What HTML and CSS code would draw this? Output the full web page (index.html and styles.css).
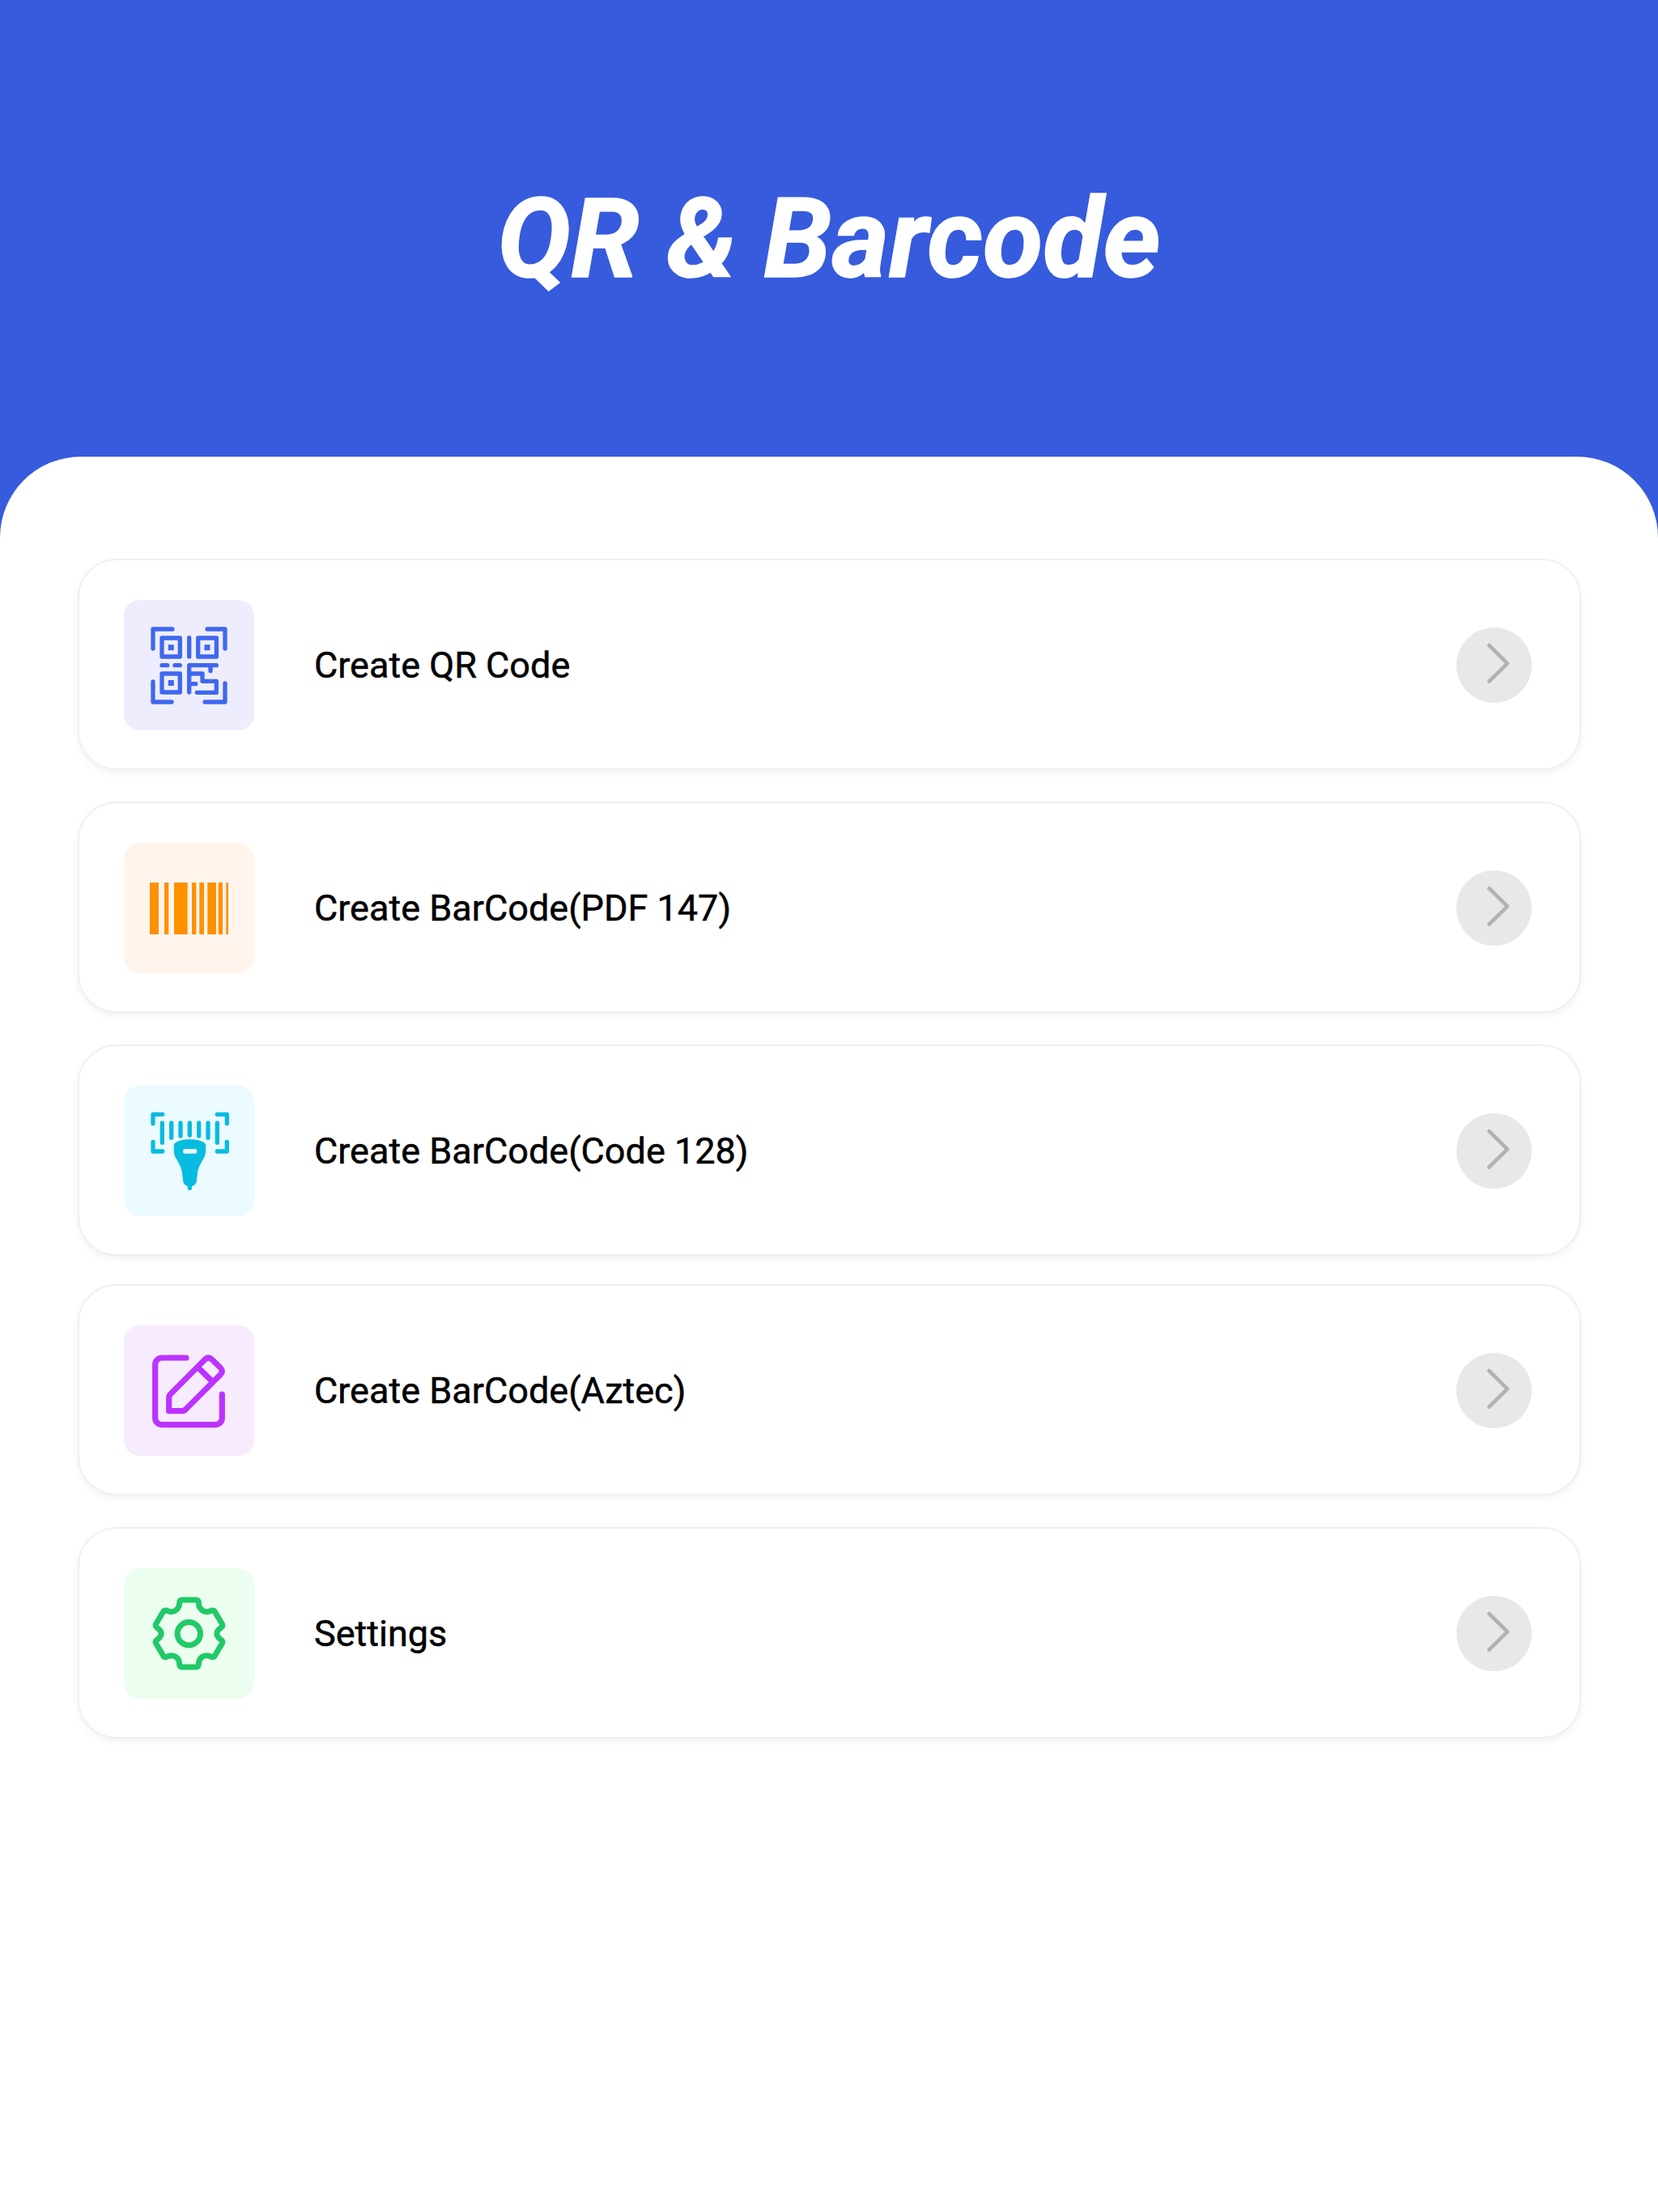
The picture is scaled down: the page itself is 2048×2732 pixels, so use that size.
FILE: index.html
```html
<!DOCTYPE html>
<html lang="en">
<head>
  <meta charset="UTF-8" />
  <meta name="viewport" content="width=device-width, initial-scale=1.0"/>
  <title>QR &amp; Barcode</title>
  <link rel="stylesheet" href="styles.css">
</head>
<body>
  <header class="header">
    <h1>QR &amp; Barcode</h1>
  </header>

  <main class="panel">
    <a class="card">
      <div class="icon icon-qr">
        <svg viewBox="0 0 161 161" fill="none" stroke="#3f68ee" stroke-width="5.3" stroke-linecap="round" stroke-linejoin="round">
          <path d="M36 60V36H60M103 36H125V60M36 101V126H59M100 126H125V103"/>
          <rect x="47" y="47" width="22.3" height="23"/>
          <rect x="91.7" y="47" width="22.7" height="23"/>
          <rect x="47" y="91" width="22.3" height="23"/>
          <path d="M80.7 46.7V70M47 80.7H53.7M63 80.7H69.3M80.7 114V80.7H114.3M107 80.7V87.7M80.7 91H97V100.3H114.3V114.3H90.3M80.7 103.7H88.7"/>
          <g fill="#3f68ee" stroke="none">
            <rect x="54.8" y="55.2" width="7" height="7"/>
            <rect x="99.5" y="55.2" width="7" height="7"/>
            <rect x="54.8" y="99" width="7" height="7"/>
          </g>
        </svg>
      </div>
      <span class="label">Create QR Code</span>
      <div class="arrow"><svg viewBox="0 0 93 93" fill="none"><path d="M40.3 22L63 44.3L40.3 66.7"/></svg></div>
    </a>

    <a class="card">
      <div class="icon icon-pdf">
        <svg viewBox="0 0 161 161" fill="#ff9000">
          <rect x="32" y="49" width="11" height="64"/>
          <rect x="50" y="49" width="5.3" height="64"/>
          <rect x="62" y="49" width="16.7" height="64"/>
          <rect x="84" y="49" width="5.3" height="64"/>
          <rect x="93.3" y="49" width="5.7" height="64"/>
          <rect x="103.3" y="49" width="10.7" height="64"/>
          <rect x="116.7" y="49" width="5.3" height="64"/>
          <rect x="126.3" y="49" width="2.7" height="64"/>
        </svg>
      </div>
      <span class="label">Create BarCode(PDF 147)</span>
      <div class="arrow"><svg viewBox="0 0 93 93" fill="none"><path d="M40.3 22L63 44.3L40.3 66.7"/></svg></div>
    </a>

    <a class="card">
      <div class="icon icon-code128">
        <svg viewBox="0 0 161 161" fill="none" stroke="#08bbe0" stroke-width="5.3" stroke-linecap="round" stroke-linejoin="round">
          <path d="M36 46.7V35.3H47.7M115.3 35.3H127.3V46.7M36 69.3V81H47.7M115.3 81H127.3V69.3"/>
          <path d="M47.3 46V70.3M58.7 46V64.3M70 46V62M81.3 46V61M92.7 46V62M104 46V64.3M115.3 46V70.3"/>
          <path fill="#08bbe0" stroke="none" d="M81.3 66.3C72 66.3 66 68 62 72C61.5 80 61.5 84 64 89C68 96 71 100 72 108L73 116C73 120 75 123 78.7 124L78.7 127A2.7 2.7 0 0 0 84 127L84 124C88 123 90 120 90 116L91 108C92 100 95 96 99 89C101.5 84 101.5 80 101 72C97 68 91 66.3 81.3 66.3Z"/>
          <rect x="73" y="78" width="17.3" height="5.7" rx="2.8" fill="#ebfbff" stroke="none"/>
        </svg>
      </div>
      <span class="label">Create BarCode(Code 128)</span>
      <div class="arrow"><svg viewBox="0 0 93 93" fill="none"><path d="M40.3 22L63 44.3L40.3 66.7"/></svg></div>
    </a>

    <a class="card card-tight">
      <div class="icon icon-aztec">
        <svg viewBox="0 0 161 161" fill="none" stroke="#bb33ff" stroke-width="7.2" stroke-linecap="round" stroke-linejoin="round">
          <path d="M77 40H47A8.3 8.3 0 0 0 38.7 48.3V114.4A8.3 8.3 0 0 0 47 122.7H113A8.3 8.3 0 0 0 121.3 114.4V85"/>
          <path d="M55.7 105.7V89Q55.7 86.500 57.400 85L100.500 41.700Q104.500 38.200 108.500 41.700L119.500 52.500Q123 56.500 119.500 60.500L76.500 103.500Q74.500 105.700 72 105.700Z"/>
          <path d="M93.7 54L109.300 69.300"/>
        </svg>
      </div>
      <span class="label">Create BarCode(Aztec)</span>
      <div class="arrow"><svg viewBox="0 0 93 93" fill="none"><path d="M40.3 22L63 44.3L40.3 66.7"/></svg></div>
    </a>

    <a class="card">
      <div class="icon icon-settings">
        <svg viewBox="0 0 161 161" fill="none" stroke="#22c968" stroke-width="7" stroke-linecap="round" stroke-linejoin="round">
          <path d="M72 39H89Q92 39 92.3 42L92.5 45C93.5 51 100 55.500 106 53L108.500 52Q111 51.500 112.300 53.500L121.500 69Q122.500 71.500 120.500 73L118.500 74.500C113.500 78.500 113.500 83 118.500 87L120.500 88.500Q122.500 90 121.500 92.500L112.300 108Q111 110 108.500 109.500L106 108.500C100 106 93.500 110 92.500 116L92.300 119Q92 122 89 122H72Q69 122 68.700 119L68.500 116C67.500 110 61 106 55 108.500L52.500 109.500Q50 110 48.700 108L39.500 92.500Q38.500 90 40.500 88.500L42.500 87C47.500 83 47.500 78.500 42.500 74.500L40.500 73Q38.500 71.500 39.500 69L48.700 53.500Q50 51.500 52.500 52L55 53C61 55.500 67.500 51 68.500 45L68.700 42Q69 39 72 39Z"/>
          <circle cx="80.300" cy="80.700" r="14.200"/>
        </svg>
      </div>
      <span class="label">Settings</span>
      <div class="arrow"><svg viewBox="0 0 93 93" fill="none"><path d="M40.3 22L63 44.3L40.3 66.7"/></svg></div>
    </a>
  </main>
</body>
</html>
```

FILE: styles.css
```css
html, body { margin: 0; padding: 0; background: #fff; }
body { font-family: Roboto, "Noto Sans", sans-serif; width: 2048px; height: 2732px; overflow: hidden; }

.header { height: 664px; background: #365bdd; display: flex; justify-content: center; padding-top: 230px; box-sizing: border-box; }
.header h1 { margin: 0; color: #fff; font-size: 136px; line-height: 132px; font-weight: 700; font-style: italic; -webkit-text-stroke: 1.5px #fff; }

.panel { margin-top: -100px; background: #fff; border-radius: 100px 100px 0 0; padding: 126px 95px 0 96px; display: flex; flex-direction: column; gap: 39px; }

.card { height: 261px; box-sizing: border-box; border: 2px solid #f0f0f0; border-radius: 48px; background: #fff; box-shadow: 0 4px 10px rgba(0,0,0,0.05); display: flex; align-items: center; padding: 2px 59px 0 55px; }
.card-tight { margin-top: -4px; }

.icon { width: 161px; height: 161px; border-radius: 20px; flex: none; }
.icon svg { display: block; width: 161px; height: 161px; }
.icon-qr { background: #eeedfe; }
.icon-pdf { background: #fff5ec; }
.icon-code128 { background: #ebfbff; }
.icon-aztec { background: #f7ebfe; }
.icon-settings { background: #ecfeef; }

.label { margin-left: 74px; flex: 1; font-size: 45px; font-weight: 400; color: #000; -webkit-text-stroke: 0.5px #000; }

.arrow { width: 93px; height: 93px; border-radius: 50%; background: #e8e8e8; flex: none; }
.arrow svg { display: block; width: 93px; height: 93px; stroke: #b2b2b2; stroke-width: 4.6; stroke-linecap: round; stroke-linejoin: round; }
```
